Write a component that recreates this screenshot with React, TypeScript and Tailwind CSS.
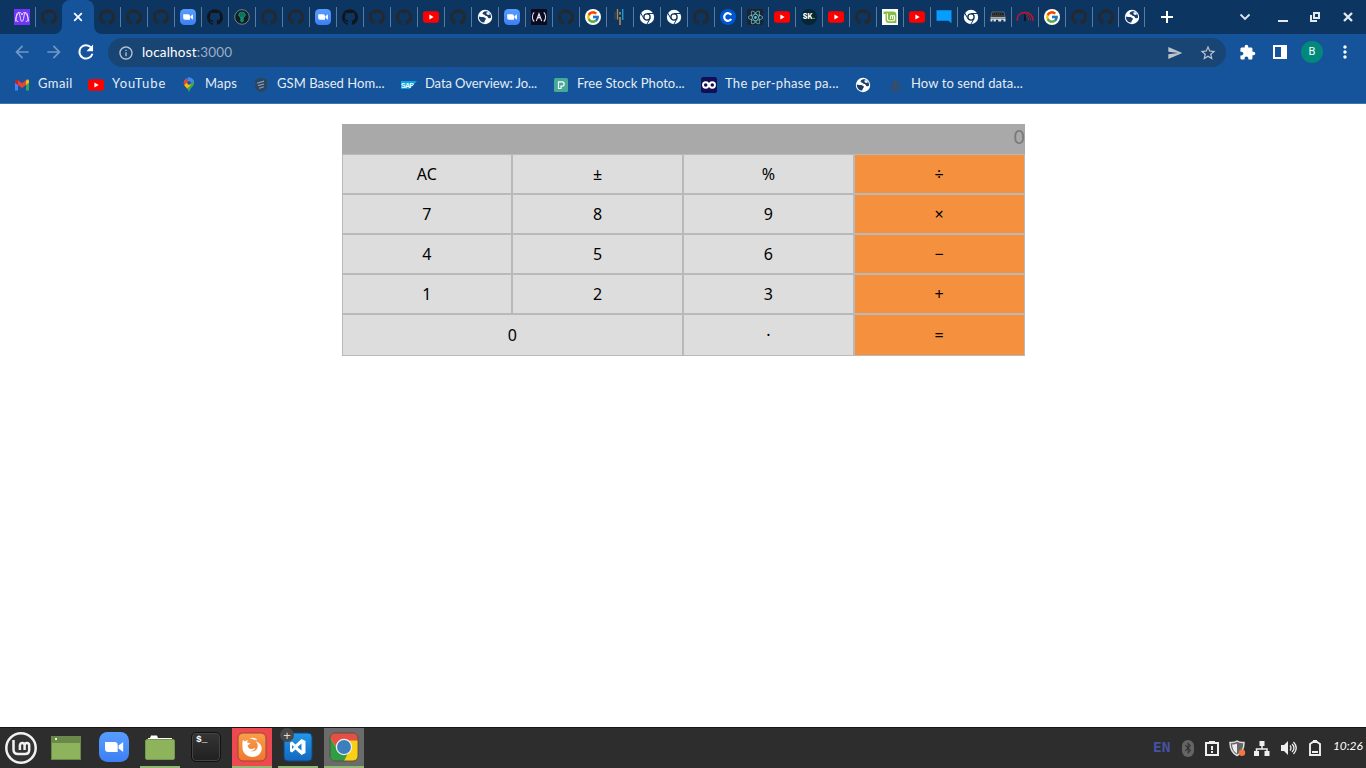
import React, { useState } from "react";
import { FaAnchor, FaBluetoothB } from "react-icons/fa";
import { FcGoogle } from "react-icons/fc";
import { SiGithub, SiReact } from "react-icons/si";
import { MdExtension, MdStarBorder, MdSend, MdArrowBack, MdArrowForward, MdRefresh, MdInfoOutline, MdMoreVert } from "react-icons/md";

const GitHub = () => <SiGithub size={16} color="#24292f" />;
const GitHubDark = () => <SiGithub size={16} color="#11161d" />;

const YouTube = () => (
  <svg width="16" height="16" viewBox="0 0 16 16">
    <rect y="2.3" width="16" height="11.5" rx="2.8" fill="#f00" />
    <path d="M6.4 5.6v4.8l4.2-2.4z" fill="#fff" />
  </svg>
);

const Zoom = ({ size = 16 }: { size?: number }) => (
  <svg width={size} height={size} viewBox="0 0 30 30">
    <defs>
      <linearGradient id="zoomFill" x1="0" y1="0" x2="0" y2="1">
        <stop offset="0" stopColor="#579dff" />
        <stop offset="1" stopColor="#3d7ff5" />
      </linearGradient>
    </defs>
    <rect width="30" height="30" rx="8.5" fill="url(#zoomFill)" />
    <path d="M6 10h9.5a3.2 3.2 0 0 1 3.2 3.2V20H9.2A3.2 3.2 0 0 1 6 16.800zM19.600 13.400L24.200 10v10l-4.600-3.400z" fill="#fff" />
  </svg>
);

const Globe = () => (
  <svg width="16" height="16" viewBox="0 0 16 16">
    <circle cx="8" cy="8" r="7.200" fill="#fff" />
    <path d="M1.800 7.400c1.500.5 3.200.3 4.700.6 1.500.4 1.300 1.400 2.600 1.600-.1 1.300-1.500 1.500-1.800 3.900C4.300 13.400 1.800 11.200 1.800 7.400zM8 2.300C6.800 3.200 5.300 3.500 5.600 4.800c.5 1.200 1.700.5 2.400 1.500.5 1.200 2.200.6 2.700 1.600.3 1.300 1.900 1.700 3.300.9C14.300 4.800 11.600 2.100 8 2.300z" fill="#173e6d" />
    <path d="M9.500 3.300h2.300l1.300 2-2.100.8-1.500-1z" fill="#fff" />
  </svg>
);

const ChromeMono = () => (
  <svg width="16" height="16" viewBox="0 0 16 16">
    <circle cx="8" cy="8" r="7.200" fill="#fff" />
    <path d="M8 4.500h7M5 9.800L1.500 3.700M11 9.800l-3.500 6" stroke="#0c3561" strokeWidth="1" />
    <circle cx="8" cy="8" r="3.100" fill="#fff" stroke="#0c3561" strokeWidth="1.300" />
  </svg>
);

const Monster = () => (
  <svg width="16" height="16" viewBox="0 0 16 16">
    <rect width="16" height="16" fill="#7136f5" />
    <path d="M1.600 12.500C2 7 2.800 3.500 4.300 3.500c2 0 1.700 9 3.700 9s1.700-9 3.700-9c1.500 0 2.300 3.500 2.700 9M4.300 12.500c-2 0-2.700-1.500-2.300-3C2.700 6 4 3.500 6 3.500c1 0 1.500 1 2 2.500.5-1.500 1-2.500 2-2.500 2 0 3.300 2.500 4 6 .4 1.500-.3 3-2.300 3" fill="none" stroke="#eadfff" strokeWidth="1" />
  </svg>
);

const GreenBadge = () => (
  <svg width="16" height="16" viewBox="0 0 16 16">
    <circle cx="8" cy="8" r="7.300" fill="#111d22" stroke="#7c8d93" strokeWidth=".9" />
    <path d="M8 2.800c2.500 0 3.800 1.600 3.800 3.800L9.700 9v3.300L8 13.500l-1.700-1.200V9L4.200 6.600C4.200 4.400 5.500 2.800 8 2.800z" fill="#118c72" />
    <path d="M6.300 4v3.500M8 3.300V8M9.700 4v3.500" stroke="#0b4d48" strokeWidth=".7" />
  </svg>
);

const CodeCamp = () => (
  <svg width="16" height="16" viewBox="0 0 16 16">
    <rect width="16" height="16" fill="#0a0a23" />
    <path d="M3.200 3.300C.8 5.500.8 10.300 3.200 12.700M12.800 3.300c2.400 2.200 2.400 7 0 9.400M5.300 12L8 4.500l2.700 7.500M6.800 9.500L8 8l1.300 1.500" stroke="#e8e8ee" strokeWidth="1.050" fill="none" />
  </svg>
);

const Google = () => (
  <span className="flex size-4 items-center justify-center rounded-full bg-white">
    <FcGoogle size={14} />
  </span>
);

const Bars = () => (
  <svg width="16" height="16" viewBox="0 0 16 16">
    <path d="M5.500 0v10.500" stroke="#b08a4c" strokeWidth="1.400" />
    <path d="M8 3v2.500m0 2.500v8" stroke="#c28e45" strokeWidth="1.500" />
    <path d="M10.700 0v11" stroke="#1a98c5" strokeWidth="1.500" />
    <path d="M3 3v7.500" stroke="#4a4f55" />
  </svg>
);

const Coursera = () => (
  <svg width="16" height="16" viewBox="0 0 16 16">
    <circle cx="8" cy="8" r="8" fill="#0056d2" />
    <path d="M11.200 6A3.800 3.800 0 1 0 11.200 10" fill="none" stroke="#fff" strokeWidth="2.200" />
  </svg>
);

const ReactTab = () => (
  <span className="flex size-4 items-center justify-center rounded-[2px] bg-[#20232a]">
    <SiReact size={15} color="#61c5dc" />
  </span>
);

const Skill = () => (
  <span className="flex size-4 items-center justify-center rounded-full bg-[#052632] font-['Inter'] text-[7px] font-extrabold text-white">
    SK<span className="text-[#25e77c]">.</span>
  </span>
);

const MintTab = () => (
  <svg width="16" height="16" viewBox="0 0 16 16">
    <rect width="16" height="16" fill="#fff" />
    <path d="M1.500 2.500H11a3.400 3.400 0 0 1 3.400 3.400V14H7a3.500 3.500 0 0 1-3.500-3.500V5h-2z" fill="#86be43" />
    <path d="M5.400 4.500v5.300c0 1.400.8 2 2.100 2h3.400c1 0 1.700-.6 1.700-1.700V7.500c0-1.400-2-1.400-2 0V10m0-2.500c0-1.400-2.100-1.400-2.100 0V10" fill="none" stroke="#fff" strokeWidth="1.100" />
  </svg>
);

const Chat = () => (
  <svg width="16" height="16" viewBox="0 0 16 16">
    <path d="M.5 1.200h15v13l-3-2.500H.5z" fill="#099cff" />
  </svg>
);

const Machine = () => (
  <svg width="18" height="16" viewBox="0 0 18 16">
    <path d="M3 3h12l1 5H2z" fill="#1c2022" stroke="#999" strokeWidth=".5" />
    <path d="M4 5h10M3.500 6.500h11" stroke="#555" strokeDasharray="1 1" />
    <path d="M1.500 8.700h15" stroke="#c7c7c7" />
    <path d="M1.500 9.500h15v3h-2v-1.700h-2.300v1.700h-3v-1.700H6.900v1.700H4.600v-1.700H3.400v1.700H1.500z" fill="#dedede" />
  </svg>
);

const Gauge = () => (
  <svg width="18" height="16" viewBox="0 0 18 16">
    <path d="M1.500 12C.5 6 4.500 3.500 9 3.500s8.500 3 8 8.500" fill="none" stroke="#c91428" strokeWidth="1.400" />
    <path d="M10 5.500c3 .2 4.800 2.800 4.600 6M10 7.500c2 .2 3 2 2.700 4" fill="none" stroke="#b71930" strokeWidth="1" />
    <path d="M8 5l2 2v5H8z" fill="#08152a" />
  </svg>
);

const tabs: React.FC[] = [
  GitHub, GitHub, GitHub, Zoom, GitHubDark, GreenBadge, GitHub, GitHub, Zoom, GitHubDark,
  GitHub, GitHub, YouTube, GitHub, Globe, Zoom, CodeCamp, GitHub, Google, Bars,
  ChromeMono, ChromeMono, GitHub, Coursera, ReactTab, YouTube, Skill, YouTube, GitHub, MintTab,
  YouTube, Chat, ChromeMono, Machine, Gauge, Google, GitHub,
];

const TabSlot = ({ icon: Icon, width = "w-[27px]" }: { icon: React.FC; width?: string }) => (
  <div className={`${width} flex h-5 shrink-0 items-center justify-center border-r border-[#5b7b9d]`}>
    <Icon />
  </div>
);

function TabStrip() {
  return (
    <div className="flex h-[34px] bg-[#0c3561]">
      <div className="flex w-[62px] items-center pl-[9px]">
        <TabSlot icon={Monster} />
        <div className="flex w-[26px] justify-center"><GitHub /></div>
      </div>
      <div className="relative flex w-8 items-center justify-center rounded-t-[8px] bg-[#15539a]">
        <svg className="absolute -left-2 bottom-0" width="8" height="8"><path d="M8 0v8H0a8 8 0 0 0 8-8z" fill="#15539a" /></svg>
        <svg className="absolute -right-2 bottom-0" width="8" height="8"><path d="M0 0v8h8a8 8 0 0 1-8-8z" fill="#15539a" /></svg>
        <svg width="10" height="10" viewBox="0 0 10 10"><path d="M1.200 1.200l7.600 7.600m0-7.600L1.200 8.800" stroke="#fff" strokeWidth="1.700" /></svg>
      </div>
      <div className="flex items-center">
        {tabs.map((icon, i) => <TabSlot key={i} icon={icon} />)}
        <TabSlot icon={GitHub} width="w-[26px]" />
        <TabSlot icon={Globe} width="w-[26px]" />
      </div>
      <div className="flex w-[44px] items-center justify-center">
        <svg width="12" height="12"><path d="M6 0v12M0 6h12" stroke="#fff" strokeWidth="2" /></svg>
      </div>
      <div className="ml-auto flex items-center">
        <div className="flex w-10 justify-center"><svg width="12" height="8"><path d="M1.500 1.500L6 6l4.500-4.500" fill="none" stroke="#dce4ec" strokeWidth="1.900" /></svg></div>
        <div className="flex w-9 justify-center pt-2"><svg width="10" height="2"><path d="M0 1h10" stroke="#e3e9ee" strokeWidth="2" /></svg></div>
        <div className="flex w-[28px] justify-center"><svg width="10" height="10"><path d="M4 1h5v5H4zM1 3v6h6" fill="none" stroke="#e3e9ee" strokeWidth="2" /></svg></div>
        <div className="flex w-[37px] justify-center"><svg width="10" height="10"><path d="M1 1l8 8m0-8L1 9" stroke="#e3e9ee" strokeWidth="2.300" /></svg></div>
      </div>
    </div>
  );
}

function Toolbar() {
  return (
    <div className="flex h-9 items-center bg-[#15539a]">
      <div className="flex w-[108px] items-center pl-3">
        <div className="w-8"><MdArrowBack size={20} color="#7198c5" /></div>
        <div className="w-8"><MdArrowForward size={20} color="#7198c5" /></div>
        <svg width="20" height="20" viewBox="0 0 24 24"><path d="M18 6.500A8 8 0 1 0 19.700 14" fill="none" stroke="#fff" strokeWidth="2.400" /><path d="M20.500 3v8h-8z" fill="#fff" /></svg>
      </div>
      <div className="mt-px flex h-[29px] w-[1118px] items-center rounded-full bg-[#194574] pr-[9px] pl-[10px]">
        <MdInfoOutline size={16} color="#b8c4d2" />
        <span className="ml-2 font-['Lato',sans-serif] text-[13.5px] tracking-[0.18px] text-white">
          localhost<span className="text-[#9aafc6]">:3000</span>
        </span>
        <div className="ml-auto flex items-center gap-4">
          <MdSend size={16} color="#bcc4cc" />
          <MdStarBorder size={18} color="#bcc4cc" />
        </div>
      </div>
      <div className="flex items-center pl-[13px]">
        <div className="w-[34px]"><MdExtension size={17} color="#fff" /></div>
        <div className="w-[28px]"><svg width="14" height="14"><path d="M1 1h8v12H1z" fill="none" stroke="#fff" strokeWidth="2" /><path d="M9 0h5v14H9z" fill="#fff" /></svg></div>
        <div className="flex size-[22px] items-center justify-center rounded-full bg-[#02897b] font-['Roboto'] text-[11px] text-white">B</div>
        <div className="ml-[12px]"><MdMoreVert size={20} color="#fff" /></div>
      </div>
    </div>
  );
}

const Gmail = () => (
  <svg width="16" height="16" viewBox="0 0 16 16">
    <path d="M1 4.200v9.300h3V7.500z" fill="#4285f4" /><path d="M12 7.500v6h3V4.200z" fill="#34a853" />
    <path d="M12 4.200V8l3-2.300V4c0-1.500-1.500-2-2.500-1.200z" fill="#fbbc04" /><path d="M1 4c0-1.500 1.500-2 2.500-1.200L4 3.200V8L1 5.700z" fill="#c5221f" />
    <path d="M4 3.200l4 3.100 4-3.100V8l-4 3-4-3z" fill="#ea4335" />
  </svg>
);

const Maps = () => (
  <svg width="16" height="16" viewBox="0 0 16 16">
    <clipPath id="pin"><path d="M8 .5A5.200 5.200 0 0 1 13.200 6c0 3.500-4 4.300-5.200 9.500C6.800 10.300 2.800 9.500 2.800 6A5.200 5.200 0 0 1 8 .5z" /></clipPath>
    <g clipPath="url(#pin)">
      <path d="M0 0h16v16H0z" fill="#34a853" /><path d="M0 0h12L4 9.500 0 6z" fill="#1a73e8" /><path d="M0 0h4l4 5-4 4.500L0 7z" fill="#ea4335" />
      <path d="M7 0h9v2L9.500 7 7 4z" fill="#4285f4" /><path d="M2.500 9L8 3.500 10 8l-5 4.500z" fill="#fbbc04" />
    </g>
    <circle cx="8" cy="5.800" r="1.900" fill="#15539a" />
  </svg>
);

const Shield = () => (
  <svg width="16" height="16" viewBox="0 0 16 16">
    <path d="M8 .8l6 2.200v6.500c0 3-3 4.500-6 5.700-3-1.200-6-2.700-6-5.700V3z" fill="#2f4458" />
    <path d="M4 6.200l7-2.100M5 8.600l6-1.600M6 11.300l4.900-1.600" stroke="#7fa2cb" strokeWidth="1.200" fill="none" />
    <path d="M1.500 6l2 .8v2l-2-.7z" fill="#15539a" />
  </svg>
);

const Sap = () => (
  <span className="flex h-2 w-4 items-center bg-[#08a5e5] [clip-path:polygon(0_0,100%_0,55%_100%,0_100%)]">
    <span className="font-['Liberation_Sans'] text-[7px] leading-none font-bold tracking-[-0.7px] text-white">SAP</span>
  </span>
);

const Pexels = () => (
  <svg width="16" height="16" viewBox="0 0 16 16">
    <rect x="1" y="1" width="14" height="14" rx="1.500" fill="#45aa98" />
    <path d="M5.500 4.800H9a2 2 0 0 1 0 4.300H8v2.400H5.500z" fill="none" stroke="#fff" strokeWidth="1.200" />
  </svg>
);

const Infinity = () => (
  <svg width="16" height="16" viewBox="0 0 16 16">
    <rect width="16" height="16" rx="2.500" fill="#120d56" />
    <circle cx="4.700" cy="8" r="2.700" fill="none" stroke="#fff" strokeWidth="1.900" />
    <circle cx="11.300" cy="8" r="2.700" fill="none" stroke="#fff" strokeWidth="1.900" />
  </svg>
);

const Anchor = () => <span className="flex size-4 items-center justify-center"><FaAnchor size={13} color="#484b52" /></span>;

const bookmarks: { icon: React.FC; text: string; width: string; tracking: string }[] = [
  { icon: Gmail, text: "Gmail", width: "w-[74px]", tracking: "tracking-[0.4px]" },
  { icon: YouTube, text: "YouTube", width: "w-[93px]", tracking: "tracking-[0.95px]" },
  { icon: Maps, text: "Maps", width: "w-[72px]", tracking: "tracking-[0.2px]" },
  { icon: Shield, text: "GSM Based Hom...", width: "w-[148px]", tracking: "tracking-[0.05px]" },
  { icon: Sap, text: "Data Overview: Jo...", width: "w-[152px]", tracking: "tracking-[-0.1px]" },
  { icon: Pexels, text: "Free Stock Photo...", width: "w-[148px]", tracking: "tracking-[0.05px]" },
  { icon: Infinity, text: "The per-phase pa...", width: "w-[154px]", tracking: "tracking-[0.3px]" },
  { icon: Globe, text: "", width: "w-[32px]", tracking: "" },
  { icon: Anchor, text: "How to send data...", width: "w-[140px]", tracking: "tracking-[0.1px]" },
];

function BookmarkBar() {
  return (
    <div className="flex h-[34px] border-b border-[#3f75ae] bg-[#15539a] pl-[14px]">
      {bookmarks.map((b, i) => (
        <div key={i} className={`${b.width} flex shrink-0 gap-2 whitespace-nowrap`}>
          <div className="flex h-[30px] w-4 shrink-0 items-center"><b.icon /></div>
          <span className={`${b.tracking} h-[27px] font-['Lato',sans-serif] text-[13px] leading-[26px] text-[#e4ecf5]`}>{b.text}</span>
        </div>
      ))}
    </div>
  );
}

const keys = ["AC", "±", "%", "÷", "7", "8", "9", "×", "4", "5", "6", "−", "1", "2", "3", "+", "0", "·", "="];

function Calculator() {
  const [shown, setShown] = useState("0");
  const press = (key: string) => {
    if (key === "AC") setShown("0");
    else if (/[0-9]/.test(key)) setShown(shown === "0" ? key : shown + key);
  };
  return (
    <div className="mx-auto mt-5 w-1/2">
      <div className="h-[30px] bg-[#a9a9a9] text-right font-['Lato',sans-serif] text-[18.500px] leading-[27px] text-[#777]">{shown}</div>
      <div className="grid grid-cols-4 grid-rows-[40px_40px_40px_40px_42px]">
        {keys.map((key, i) => (
          <button
            key={key}
            onClick={() => press(key)}
            className={`border border-[#b9b9b9] font-['Noto_Sans',sans-serif] text-[16px] leading-none text-black ${i % 4 === 3 && i < 16 || key === "=" ? "bg-[#f5913e]" : "bg-[#ddd]"} ${key === "0" ? "col-span-2" : ""}`}
          >
            {key}
          </button>
        ))}
      </div>
    </div>
  );
}

const TaskItem = ({ children, className = "", open = false }: { children: React.ReactNode; className?: string; open?: boolean }) => (
  <div className={`relative flex h-10 w-10 shrink-0 items-center justify-center ${open ? "border-b-2 border-[#8fb873]" : ""} ${className}`}>{children}</div>
);

const MintLogo = () => (
  <svg width="32" height="32" viewBox="0 0 32 32">
    <circle cx="16" cy="16" r="14.700" fill="#333" stroke="#f2f2f2" strokeWidth="2.500" />
    <path d="M8.500 8v9.500c0 3 1.500 4.500 4.500 4.500h7c2.500 0 4.200-1.500 4.200-4v-4.500c0-3.300-4.600-3.300-4.600 0V18m0-4.500c0-3.300-4.700-3.300-4.700 0V18" fill="none" stroke="#f2f2f2" strokeWidth="2.500" />
  </svg>
);

const DesktopIcon = () => (
  <svg width="30" height="24"><rect width="30" height="24" fill="#69894a" /><path d="M1 7h28v16H1z" fill="#8db35c" /><rect x="4" y="2" width="2" height="2" fill="#e9f2df" /></svg>
);

const FolderIcon = () => (
  <svg width="30" height="25"><path d="M3 7V3h2l1-2.500h6L13 3h14v4z" fill="#fff" /><rect x=".5" y="4.500" width="29" height="20" rx="1.500" fill="#8db35c" stroke="#75974c" /></svg>
);

const TerminalIcon = () => (
  <div className="flex size-[30px] rounded-[5px] border border-[#111] bg-linear-to-b from-[#353535] to-[#202020] pt-[3px] pl-[4px] shadow-[inset_0_0_0_1px_#444] font-['Liberation_Mono'] text-[9.5px] leading-[8px] font-bold text-white">$_</div>
);

const FirefoxIcon = () => (
  <svg width="30" height="30" viewBox="0 0 30 30">
    <defs><linearGradient id="foxTile" x1="0" y1="0" x2="0" y2="1"><stop offset="0" stopColor="#f8a04c" /><stop offset="1" stopColor="#f1762f" /></linearGradient></defs>
    <rect x="1" y="1" width="28" height="28" rx="5" fill="url(#foxTile)" stroke="#9b4a26" />
    <path d="M6 8l2 1.500c1-1 2-1.400 3.500-1.500-1 .8-1.400 1.500-1.400 2.600l3.400.7-2.800 2.200c.2 2.300 1.800 4 4.200 3.500 1.500-.2 2.200-1 3.500-.7-1 2-3 3-5 2.700 3.500 1.200 7-1 7.300-4.500.2-2.500-.8-4-2-5.300 3.800 1.200 6.200 4 6 7.800-.3 4.500-4.300 8-9.300 8s-9.700-3.700-9.900-9C5.400 13 5 10.500 6 8z" fill="#fff" />
    <path d="M12 6.500c3-1.500 6.500-.8 8.500 1.500l-3.500-.3c-2-1.200-3.300-1.200-5-1.200z" fill="#fff" />
  </svg>
);

const StudioIcon = () => (
  <svg width="30" height="30" viewBox="0 0 30 30">
    <defs><linearGradient id="studioTile" x1="0" y1="0" x2="0" y2="1"><stop offset="0" stopColor="#2199ec" /><stop offset="1" stopColor="#1467bd" /></linearGradient></defs>
    <rect x="1" y="1" width="28" height="28" rx="4" fill="url(#studioTile)" stroke="#0d4a83" />
    <path fillRule="evenodd" d="M18.500 7L22.500 9v12l-4 2-6-5.600L9 20.500 7 19.300v-8.600L9 9.500l3.500 3.100zM18.500 11.500v7L14.500 15zM9 13v4l2-2z" fill="#fff" />
  </svg>
);

const ChromeIcon = () => (
  <svg width="30" height="30" viewBox="0 0 30 30">
    <clipPath id="tile"><rect x="1" y="1" width="28" height="28" rx="5" /></clipPath>
    <g clipPath="url(#tile)">
      <path d="M0 0h30v30H0z" fill="#f9d015" /><path d="M0 0h30v8.500H15L8.500 17 0 4z" fill="#e64f45" /><path d="M0 4l9 14.500 10 2.500-4.500 9H0z" fill="#319b45" />
    </g>
    <rect x="1" y="1" width="28" height="28" rx="5" fill="none" stroke="#4b4938" strokeWidth=".8" />
    <circle cx="15" cy="15" r="7.600" fill="#3d7fbd" stroke="#f0f0f0" strokeWidth="1.300" />
  </svg>
);

function Tray() {
  return (
    <div className="ml-auto flex h-full items-center">
      <span className="w-[37px] pl-[5px] text-left font-['DejaVu_Sans_Mono'] text-[14.500px] font-bold text-[#4652a2]">EN</span>
      <div className="mr-[11px] ml-[-3px] flex h-[17px] w-3 items-center justify-center rounded-full bg-[#656565]"><FaBluetoothB size={12} color="#303030" /></div>
      <div className="flex w-[24px] justify-start"><svg width="14" height="16"><path d="M1 3h12v12H1z" fill="none" stroke="#eee" strokeWidth="2" /><path d="M4 1h6v3H4z" fill="#eee" /><path d="M7 6v4m0 1v2" stroke="#eee" strokeWidth="2" /></svg></div>
      <div className="flex w-[19px] justify-start"><svg width="17" height="17"><path d="M8 1C5 3 3 2.500 1 2.500 1 9 3 13 8 15.500 13 13 15 9 15 2.500 13 2.500 11 3 8 1z" fill="#666" stroke="#ddd" strokeWidth="1.500" /><path d="M8 3.500v10C5 12 3.500 9 3 4.500 5.500 4.500 6.500 4.300 8 3.500z" fill="#eee" /><circle cx="13" cy="12.800" r="3.200" fill="#f17840" /></svg></div>
      <div className="ml-px flex w-[26px] justify-center"><svg width="16" height="15"><path d="M5.500 0h5v5h-5zM0 10h5v5H0zM10.500 10h5v5h-5z" fill="#eee" /><path d="M8 5v3M2.500 10V8h10.500v2" stroke="#eee" strokeWidth="1.500" fill="none" /></svg></div>
      <div className="flex w-[27px] justify-center"><svg width="16" height="14"><path d="M0 4h3l4-4v14l-4-4H0z" fill="#eee" /><path d="M9 4.500q2 2.500 0 5M11 3q4 4 0 8M12.500 1q5.500 6 0 12" fill="none" stroke="#eee" strokeWidth="1.300" /></svg></div>
      <div className="flex w-[25px] justify-center"><svg width="12" height="16"><path d="M1 4l3-2h4l3 2v11H1z" fill="none" stroke="#eee" strokeWidth="1.900" /><path d="M4 0h4v2H4zM3 11h6v2H3z" fill="#eee" /></svg></div>
      <span className="w-[39px] pb-1 pl-[6px] font-['Lato',sans-serif] text-[12px] italic tracking-[-0.1px] text-white">10:26</span>
    </div>
  );
}

function Taskbar() {
  return (
    <div className="flex h-[41px] overflow-hidden border-t border-[#171717] bg-[#2d2d2d]">
      <TaskItem className="ml-px"><MintLogo /></TaskItem>
      <TaskItem className="ml-[5px]"><DesktopIcon /></TaskItem>
      <div className="ml-2 flex gap-1.5">
        <TaskItem className="pb-0.5"><Zoom size={30} /></TaskItem>
        <TaskItem open><FolderIcon /></TaskItem>
        <TaskItem className="pb-0.5"><TerminalIcon /></TaskItem>
        <TaskItem open className="bg-[#ee4850]"><FirefoxIcon /></TaskItem>
        <TaskItem open>
          <StudioIcon />
          <span className="absolute top-0 left-[2px] flex size-[14px] items-center justify-center rounded-full bg-[#484848] font-['Liberation_Sans'] text-[13px] leading-none text-[#ddd]">+</span>
        </TaskItem>
        <TaskItem open className="bg-[#6b6b6b]"><ChromeIcon /></TaskItem>
      </div>
      <Tray />
    </div>
  );
}

export default function App() {
  return (
    <div className="flex h-screen w-full flex-col overflow-hidden bg-white">
      <header><TabStrip /><Toolbar /><BookmarkBar /></header>
      <main className="flex-1"><Calculator /></main>
      <Taskbar />
    </div>
  );
}
